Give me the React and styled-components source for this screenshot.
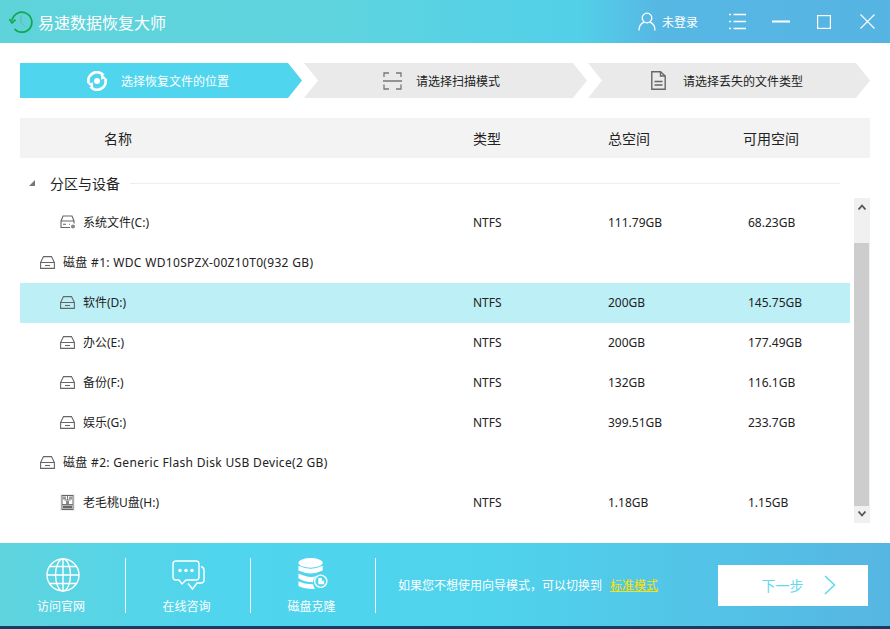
import React from 'react';
import styled, { createGlobalStyle } from 'styled-components';

const GlobalStyle = createGlobalStyle`
  html, body {
    margin: 0;
    padding: 0;
    background: #fff;
    font-family: "Noto Sans", "Noto Sans CJK SC", sans-serif;
    color: #222;
  }
`;

const Window = styled.div`
  width: 890px;
  height: 629px;
  display: flex;
  flex-direction: column;
  overflow: hidden;
`;

const TitleBar = styled.div`
  height: 43px;
  flex: none;
  display: flex;
  align-items: center;
  padding: 0 15px 0 9px;
  box-sizing: border-box;
  background: linear-gradient(90deg, #5fd3da 0%, #5fd4de 35%, #52d0e8 65%, #57b7e3 74%, #56b4e3 100%);
  color: #fff;
`;

const AppTitle = styled.div`
  font-size: 16px;
  margin-left: 5px;
  flex: 1;
`;

const Login = styled.div`
  display: flex;
  align-items: center;
  gap: 6px;
  font-size: 12px;
  margin-right: 31px;
`;

const WindowButton = styled.div`
  display: flex;
  margin-left: ${(p) => p.$gap || 0}px;
`;

const Steps = styled.div`
  display: flex;
  margin: 20px 20px 0;
  height: 35px;
  flex: none;
`;

const Step = styled.div`
  width: ${(p) => p.$width}px;
  margin-left: ${(p) => p.$offset || 0}px;
  display: flex;
  align-items: center;
  padding-left: ${(p) => p.$pad}px;
  box-sizing: border-box;
  gap: ${(p) => p.$gap}px;
  font-size: 12px;
  background: ${(p) => (p.$active ? '#4fd5ee' : '#eaeaea')};
  color: ${(p) => (p.$active ? '#fff' : '#222')};
  clip-path: ${(p) =>
    p.$active
      ? 'polygon(0 0, calc(100% - 14px) 0, 100% 50%, calc(100% - 14px) 100%, 0 100%)'
      : 'polygon(0 0, calc(100% - 14px) 0, 100% 50%, calc(100% - 14px) 100%, 0 100%, 14px 50%)'};
`;

const TableHead = styled.div`
  margin: 20px 20px 0;
  height: 40px;
  flex: none;
  display: grid;
  grid-template-columns: 453px 135px 135px 1fr;
  align-items: center;
  box-sizing: border-box;
  background: #f3f3f3;
  font-size: 14px;
  color: #222;
  & > div:first-child {
    padding-left: 84px;
  }
`;

const ListArea = styled.div`
  flex: 1;
  display: flex;
  margin: 0 20px;
  gap: 4px;
`;

const List = styled.div`
  width: 830px;
  padding-top: 5px;
`;

const SectionRow = styled.div`
  height: 40px;
  display: flex;
  align-items: center;
  font-size: 14px;
  margin-right: 10px;
`;

const Caret = styled.div`
  width: 0;
  height: 0;
  margin-left: 9px;
  border-left: 6px solid transparent;
  border-bottom: 6px solid #777;
`;

const SectionName = styled.div`
  margin-left: 15px;
`;

const SectionLine = styled.div`
  flex: 1;
  height: 1px;
  background: #eee;
  margin-left: 10px;
`;

const Row = styled.div`
  height: 40px;
  display: grid;
  grid-template-columns: 453px 135px 140px 1fr;
  align-items: center;
  padding-bottom: 2px;
  box-sizing: border-box;
  font-size: 12px;
  background: ${(p) => (p.$selected ? '#bdf0f6' : 'transparent')};
`;

const RowName = styled.div`
  display: flex;
  align-items: center;
  gap: ${(p) => (p.$tight ? 7 : 8)}px;
  padding-left: ${(p) => (p.$disk ? 20 : 40)}px;
  letter-spacing: ${(p) => (p.$disk ? 0.32 : 0)}px;
  white-space: nowrap;
  & > svg {
    margin-top: 1px;
  }
`;

const Scrollbar = styled.div`
  width: 16px;
  height: 325px;
  margin-top: 40px;
  background: #f0f0f0;
  display: flex;
  flex-direction: column;
`;

const ScrollArrow = styled.div`
  height: 45px;
  display: flex;
  justify-content: center;
  padding-top: 6px;
  box-sizing: border-box;
  &:last-child {
    height: 17px;
    padding-top: 5px;
  }
`;

const ScrollThumb = styled.div`
  width: 15px;
  height: 263px;
  background: #cdcdcd;
`;

const Footer = styled.div`
  height: 86px;
  flex: none;
  display: flex;
  align-items: center;
  padding-top: 1px;
  box-sizing: border-box;
  background: linear-gradient(90deg, #5fd4de 0%, #4fd5ee 25%, #4fd3ec 55%, #56b6e2 100%);
  border-bottom: 3px solid #1c3a63;
  color: #fff;
`;

const Tool = styled.div`
  width: ${(p) => p.$width}px;
  height: 55px;
  display: flex;
  flex-direction: column;
  align-items: center;
  justify-content: space-between;
  font-size: 12px;
  border-right: 1px solid rgba(255, 255, 255, 0.9);
`;

const ToolLabel = styled.div`
  line-height: 12px;
  margin-right: 3px;
`;

const Hint = styled.div`
  margin-left: 22px;
  font-size: 12px;
  flex: 1;
  white-space: nowrap;
`;

const HintLink = styled.span`
  color: #ffe000;
  text-decoration: underline;
  margin-left: 8px;
`;

const NextButton = styled.div`
  width: 150px;
  height: 41px;
  margin-right: 22px;
  background: #fff;
  color: #62d8ee;
  font-size: 14px;
  display: flex;
  align-items: center;
  justify-content: center;
  gap: 20px;
  padding-left: 11px;
  box-sizing: border-box;
`;

const HistoryIcon = () => (
  <svg width="24" height="24" viewBox="0 0 24 24" fill="none" stroke="#12a84a" strokeWidth="1.7">
    <path d="M3 10.5 A10 10 0 1 1 5.5 19" />
    <path d="M0.3 9 L3 13 L6.5 9.6" />
    <path d="M12 5.5 V12.5 L16 16.5" stroke="#6fb48c" strokeWidth="1" />
  </svg>
);

const UserIcon = () => (
  <svg width="18" height="19" viewBox="0 0 18 19" fill="none" stroke="#fff" strokeWidth="1.3">
    <circle cx="9" cy="6" r="4.8" />
    <path d="M1 18.5 C1 13.5 4 11 6.2 10.2 M17 18.5 C17 13.5 14 11 11.8 10.2" />
  </svg>
);

const MenuIcon = () => (
  <svg width="17" height="17" viewBox="0 0 17 17" fill="none" stroke="#fff" strokeWidth="1.4">
    <path d="M0 1.5 H2 M4.5 1.5 H17 M0 8.5 H2 M4.5 8.5 H17 M0 15.5 H2 M4.5 15.5 H17" />
  </svg>
);

const MinIcon = () => (
  <svg width="18" height="3" viewBox="0 0 18 3">
    <rect width="18" height="2" y="0.5" fill="#fff" />
  </svg>
);

const MaxIcon = () => (
  <svg width="14" height="14" viewBox="0 0 14 14" fill="none" stroke="#fff" strokeWidth="1.2">
    <rect x="0.6" y="0.6" width="12.8" height="12.8" />
  </svg>
);

const CloseIcon = () => (
  <svg width="15" height="15" viewBox="0 0 15 15" fill="none" stroke="#fff" strokeWidth="1.1">
    <path d="M0.5 0.5 L14.5 14.5 M14.5 0.5 L0.5 14.5" />
  </svg>
);

const LocationIcon = () => (
  <svg width="20" height="20" viewBox="0 0 20 20" fill="none">
    <path d="M1.6 12 A8.6 8.6 0 0 1 16.5 4.3" stroke="#fff" strokeWidth="2.8" />
    <path d="M18.4 8 A8.6 8.6 0 0 1 3.5 15.7" stroke="#fff" strokeWidth="2.8" />
    <path d="M14 3 L19.5 7.5 L14 8.5 Z" fill="#fff" />
    <path d="M6 17 L0.5 12.5 L6 11.5 Z" fill="#fff" />
    <circle cx="10" cy="10" r="3" fill="#fff" />
  </svg>
);

const ScanIcon = () => (
  <svg width="19" height="18" viewBox="0 0 19 18" fill="none" stroke="#777" strokeWidth="1.3">
    <path d="M1 5 V1 H6 M13 1 H18 V5 M0 9 H19 M1 12.5 V17 H6 M13 17 H18 V12.5" />
  </svg>
);

const FileIcon = () => (
  <svg width="15" height="19" viewBox="0 0 15 19" fill="none" stroke="#666" strokeWidth="1.4">
    <path d="M0.8 0.8 H9.5 L14.2 5 V18.2 H0.8 Z" />
    <path d="M9.5 0.8 V5 H14.2 M3.5 10.5 H11.5 M3.5 14 H11.5" />
  </svg>
);

const SystemDriveIcon = () => (
  <svg width="16" height="15" viewBox="0 0 16 15" fill="none" stroke="#666" strokeWidth="1.1">
    <path d="M1 6 L3 1 H12 L14 6 M1 6 H14 V12.5 H1 Z" />
    <path d="M3 9.2 H6 M9 9.2 H10" />
    <circle cx="13" cy="11.5" r="2.6" fill="#888" stroke="#fff" />
  </svg>
);

const DriveIcon = () => (
  <svg width="15" height="13" viewBox="0 0 15 13" fill="none" stroke="#666" strokeWidth="1.1">
    <path d="M0.6 6.5 L3.5 0.6 H11.5 L14.4 6.5 M0.6 6.5 H14.4 V12.4 H0.6 Z" />
    <path d="M5 9.5 H10" />
  </svg>
);

const UsbIcon = () => (
  <svg width="15" height="17" viewBox="0 0 15 17" fill="none">
    <rect width="15" height="17" fill="#eee" />
    <rect x="2" y="1.5" width="11" height="14" fill="#fff" stroke="#666" />
    <path d="M2 10.5 H13 M7.5 1.5 V6 M4.5 6 H10.5" stroke="#777" />
    <rect x="3" y="2.5" width="3" height="3" fill="#999" />
    <rect x="9" y="2.5" width="3" height="3" fill="#999" />
    <rect x="6" y="7" width="3" height="3" fill="#888" />
    <rect x="3" y="11.5" width="9" height="3" fill="#666" />
  </svg>
);

const ScrollUp = () => (
  <svg width="8" height="6" viewBox="0 0 8 6" fill="none" stroke="#555" strokeWidth="1.8">
    <path d="M0.5 5.5 L4 1.5 L7.5 5.5" />
  </svg>
);

const ScrollDown = () => (
  <svg width="8" height="6" viewBox="0 0 8 6" fill="none" stroke="#555" strokeWidth="1.8">
    <path d="M0.5 0.5 L4 4.5 L7.5 0.5" />
  </svg>
);

const GlobeIcon = () => (
  <svg width="34" height="34" viewBox="0 0 34 34" fill="none" stroke="#fff" strokeWidth="1.4">
    <circle cx="17" cy="17" r="16" />
    <ellipse cx="17" cy="17" rx="7.5" ry="16" />
    <path d="M17 1 V33 M1 17 H33 M4 8.5 H30 M4 25.5 H30" />
  </svg>
);

const ChatIcon = () => (
  <svg width="33" height="33" viewBox="0 -2 33 33" fill="none" stroke="#fff" strokeWidth="1.4">
    <path d="M4 1 H24 Q27 1 27 4 V17 Q27 20 24 20 H14 L10 24 L7 20 H4 Q1 20 1 17 V4 Q1 1 4 1 Z" />
    <path d="M29 6.5 Q32 7.5 32 10 V20 Q32 23 29 23 H25 L20.5 29 L16 23.5" />
    <circle cx="8" cy="10.5" r="1.7" fill="#fff" stroke="none" />
    <circle cx="14" cy="10.5" r="1.7" fill="#fff" stroke="none" />
    <circle cx="20" cy="10.5" r="1.7" fill="#fff" stroke="none" />
  </svg>
);

const CloneIcon = () => (
  <svg width="30" height="32" viewBox="0 0 30 33">
    <ellipse cx="12.5" cy="5" rx="12.5" ry="5" fill="#fff" />
    <path d="M0 8 Q12.5 14 25 8 V13 Q12.5 19 0 13 Z" fill="#fff" />
    <path d="M0 16 Q12.5 22 19 18 Q15 21 15 25 Q6 25 0 21 Z" fill="#fff" />
    <path d="M0 24 Q6 27 15 27 Q16 30 17 32 Q5 32 0 29 Z" fill="#fff" />
    <circle cx="23" cy="24" r="6.3" fill="#4fd5ee" stroke="#fff" strokeWidth="1.4" />
    <path d="M20.5 20.5 H24 V23.5 H26.5 V27 H20.5 Z" fill="#fff" />
  </svg>
);

const NextArrow = () => (
  <svg width="12" height="20" viewBox="0 0 12 20" fill="none" stroke="#62d8ee" strokeWidth="1.6">
    <path d="M1 1 L10.5 10 L1 19" />
  </svg>
);

const rows = [
  { kind: 'system', name: '系统文件(C:)', type: 'NTFS', total: '111.79GB', free: '68.23GB' },
  { kind: 'disk', name: '磁盘 #1: WDC WD10SPZX-00Z10T0(932 GB)' },
  { kind: 'drive', name: '软件(D:)', type: 'NTFS', total: '200GB', free: '145.75GB', selected: true },
  { kind: 'drive', name: '办公(E:)', type: 'NTFS', total: '200GB', free: '177.49GB' },
  { kind: 'drive', name: '备份(F:)', type: 'NTFS', total: '132GB', free: '116.1GB' },
  { kind: 'drive', name: '娱乐(G:)', type: 'NTFS', total: '399.51GB', free: '233.7GB' },
  { kind: 'disk', name: '磁盘 #2: Generic Flash Disk USB Device(2 GB)' },
  { kind: 'usb', name: '老毛桃U盘(H:)', type: 'NTFS', total: '1.18GB', free: '1.15GB' },
];

const rowIcons = {
  system: <SystemDriveIcon />,
  disk: <DriveIcon />,
  drive: <DriveIcon />,
  usb: <UsbIcon />,
};

export default function App() {
  return (
    <Window>
      <GlobalStyle />
      <TitleBar>
        <HistoryIcon />
        <AppTitle>易速数据恢复大师</AppTitle>
        <Login>
          <UserIcon />
          未登录
        </Login>
        <WindowButton><MenuIcon /></WindowButton>
        <WindowButton $gap={26}><MinIcon /></WindowButton>
        <WindowButton $gap={27}><MaxIcon /></WindowButton>
        <WindowButton $gap={29}><CloseIcon /></WindowButton>
      </TitleBar>

      <Steps>
        <Step $active $width={282} $pad={67} $gap={14}>
          <LocationIcon />
          选择恢复文件的位置
        </Step>
        <Step $width={283} $offset={2} $pad={79} $gap={14}>
          <ScanIcon />
          请选择扫描模式
        </Step>
        <Step $width={282} $offset={1} $pad={63} $gap={17}>
          <FileIcon />
          请选择丢失的文件类型
        </Step>
      </Steps>

      <TableHead>
        <div>名称</div>
        <div>类型</div>
        <div>总空间</div>
        <div>可用空间</div>
      </TableHead>

      <ListArea>
        <List>
          <SectionRow>
            <Caret />
            <SectionName>分区与设备</SectionName>
            <SectionLine />
          </SectionRow>
          {rows.map((r) => (
            <Row key={r.name} $selected={r.selected}>
              <RowName $disk={r.kind === 'disk'} $tight={r.kind === 'system'}>
                {rowIcons[r.kind]}
                <span>{r.name}</span>
              </RowName>
              <div>{r.type}</div>
              <div>{r.total}</div>
              <div>{r.free}</div>
            </Row>
          ))}
        </List>
        <Scrollbar>
          <ScrollArrow><ScrollUp /></ScrollArrow>
          <ScrollThumb />
          <ScrollArrow><ScrollDown /></ScrollArrow>
        </Scrollbar>
      </ListArea>

      <Footer>
        <Tool $width={125}>
          <GlobeIcon />
          <ToolLabel>访问官网</ToolLabel>
        </Tool>
        <Tool $width={124}>
          <ChatIcon />
          <ToolLabel>在线咨询</ToolLabel>
        </Tool>
        <Tool $width={124}>
          <CloneIcon />
          <ToolLabel>磁盘克隆</ToolLabel>
        </Tool>
        <Hint>
          如果您不想使用向导模式，可以切换到
          <HintLink>标准模式</HintLink>
        </Hint>
        <NextButton>
          下一步
          <NextArrow />
        </NextButton>
      </Footer>
    </Window>
  );
}
